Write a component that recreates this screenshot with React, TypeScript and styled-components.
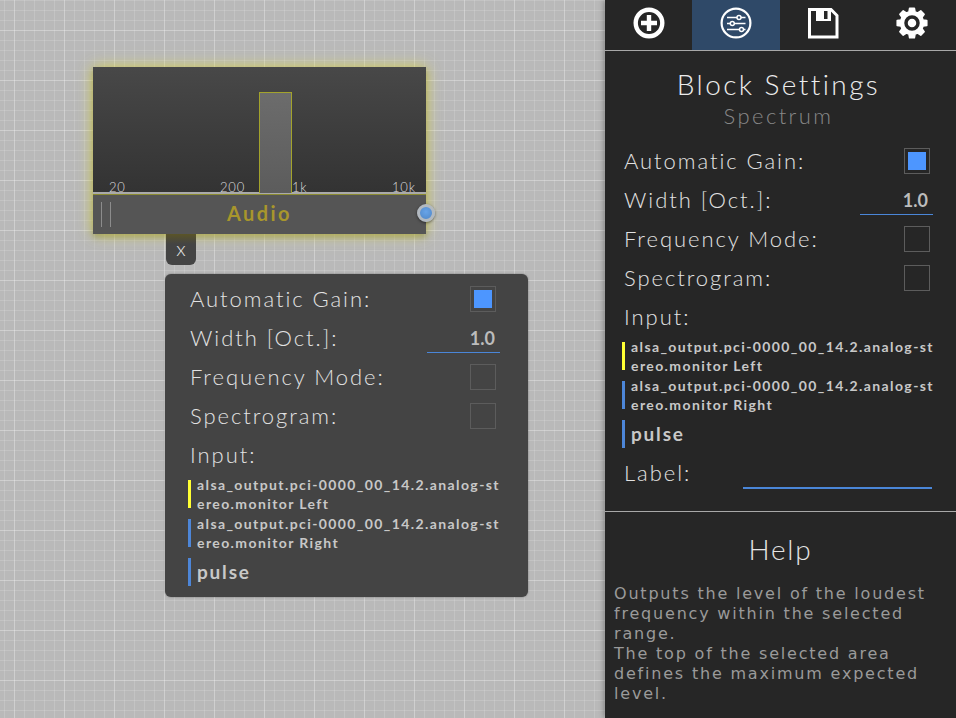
import { createGlobalStyle, styled } from 'styled-components';

const GlobalStyle = createGlobalStyle`
  html, body {
    margin: 0;
    padding: 0;
    height: 100%;
    overflow: hidden;
  }
  body {
    font-family: "Lato", "Open Sans", sans-serif;
    font-weight: 300;
    color: #ddd;
  }
`;

const Page = styled.div`
  display: flex;
  width: 956px;
  height: 718px;
  overflow: hidden;
`;

const Canvas = styled.div`
  position: relative;
  flex: 1;
  background-color: #b9b9b9;
  background-image:
    linear-gradient(to right, rgba(255, 255, 255, .2) 1px, transparent 1px),
    linear-gradient(to bottom, rgba(255, 255, 255, .2) 1px, transparent 1px),
    linear-gradient(to right, rgba(255, 255, 255, .14) 1px, transparent 1px),
    linear-gradient(to bottom, rgba(255, 255, 255, .14) 1px, transparent 1px);
  background-size: 50px 50px, 50px 50px, 10px 10px, 10px 10px;
  background-position: 14px 0, 0 30px, 4px 0, 0 0;
`;

const Block = styled.div`
  position: absolute;
  left: 93px;
  top: 67px;
  width: 333px;
  height: 167px;
  display: flex;
  flex-direction: column;
  box-shadow: 0 0 14px rgba(226, 220, 70, .8), 0 3px 6px rgba(70, 70, 0, .4);
`;

const Plot = styled.div`
  position: relative;
  height: 125px;
  background: linear-gradient(to bottom, #484848, #333);
  border-bottom: 2px solid #aaa;
  box-sizing: content-box;
`;

const SelectedBand = styled.div`
  position: absolute;
  left: 166px;
  top: 25px;
  width: 31px;
  height: 100px;
  background: linear-gradient(to bottom, #6c6c6c, #5c5c5c);
  border: 1px solid #a3a32c;
  border-bottom: none;
`;

const AxisLabel = styled.span<{ $x: number }>`
  position: absolute;
  left: ${p => p.$x}px;
  bottom: -3px;
  font-size: 13px;
  letter-spacing: .8px;
  color: #ddd;
`;

const BlockFooter = styled.div`
  position: relative;
  flex: 1;
  display: flex;
  align-items: center;
  justify-content: center;
  padding-bottom: 3px;
  background: #555;
  border-top: 1px solid #8a8a30;
`;

const BlockTitle = styled.span`
  font-size: 20px;
  font-weight: 700;
  letter-spacing: 2.4px;
  color: #a8962c;
`;

const DragHandle = styled.div`
  position: absolute;
  left: 8px;
  top: 7px;
  width: 8px;
  height: 25px;
  border-left: 1px solid #8c8c8c;
  border-right: 1px solid #8c8c8c;
`;

const OutputPort = styled.div`
  position: absolute;
  right: -9px;
  top: 9px;
  width: 12px;
  height: 12px;
  border-radius: 50%;
  background: radial-gradient(circle at 50% 40%, #68a4e8, #4f86c6);
  border: 3px solid #b2b9c0;
  box-shadow: 0 1px 3px rgba(0, 0, 0, .5);
`;

const CloseTab = styled.div`
  position: absolute;
  left: 166px;
  top: 234px;
  width: 30px;
  height: 31px;
  display: flex;
  align-items: center;
  justify-content: center;
  box-sizing: border-box;
  padding-bottom: 3px;
  border-radius: 0 0 6px 6px;
  background: linear-gradient(to bottom, #5a5428, #444 10px);
  font-size: 20px;
  font-weight: 300;
  color: #e4e4e4;
`;

const Sidebar = styled.aside`
  position: relative;
  width: 351px;
  height: 718px;
  flex-shrink: 0;
  display: flex;
  flex-direction: column;
  background: #262626;
  box-shadow: 0 0 6px rgba(0, 0, 0, .45);
`;

const Tabs = styled.nav`
  display: grid;
  grid-template-columns: 87px 1fr 1fr 1fr;
  height: 50px;
  border-bottom: 1px solid #a8a8a8;
`;

const Tab = styled.div<{ $active?: boolean }>`
  display: flex;
  align-items: center;
  justify-content: center;
  padding-bottom: 5px;
  background: ${p => (p.$active ? '#2f4968' : 'transparent')};
  color: #fff;
`;

const SettingsPanel = styled.section`
  height: 461px;
  box-sizing: border-box;
  padding: 16px 23px 0 19px;
  border-bottom: 1px solid #a8a8a8;
`;

const PanelTitle = styled.h1`
  margin: 0;
  text-align: center;
  font-size: 28px;
  line-height: 34px;
  font-weight: 300;
  letter-spacing: 2.4px;
  color: #ececec;
`;

const PanelSubtitle = styled.h2`
  margin: 1px 0 11px;
  text-align: center;
  font-size: 22px;
  line-height: 28px;
  font-weight: 300;
  letter-spacing: 2.4px;
  color: #888;
`;

const Row = styled.div`
  display: flex;
  align-items: center;
  justify-content: space-between;
  height: 39px;
`;

const RowLabel = styled.span`
  font-size: 22px;
  letter-spacing: 1.95px;
  color: #e2e2e2;
`;

const CheckBox = styled.div<{ $checked?: boolean }>`
  width: 26px;
  height: 26px;
  margin-right: 3px;
  box-sizing: border-box;
  padding: 3px;
  border: 1px solid #5c5c5c;
  &::after {
    content: '';
    display: ${p => (p.$checked ? 'block' : 'none')};
    width: 18px;
    height: 18px;
    background: #4d96ff;
  }
`;

const NumberField = styled.input`
  width: 73px;
  height: 26px;
  margin-top: 5px;
  padding: 0 5px 3px 0;
  box-sizing: border-box;
  background: transparent;
  border: none;
  border-bottom: 1px solid #4a86d8;
  outline: none;
  text-align: right;
  font-family: inherit;
  font-size: 18px;
  font-weight: 700;
  color: #bcbcbc;
`;

const TextField = styled.input`
  width: 189px;
  height: 30px;
  margin: 3px 1px 0 0;
  box-sizing: border-box;
  background: transparent;
  border: none;
  border-bottom: 2px solid #4a86d8;
  outline: none;
`;

const InputList = styled.div`
  display: flex;
  flex-direction: column;
  gap: 1px;
  width: 312px;
  margin: 1px 0 5px -2px;
`;

const InputItem = styled.div<{ $color: string }>`
  position: relative;
  padding-left: 9px;
  word-break: break-all;
  font-size: 14px;
  line-height: 19px;
  font-weight: 700;
  letter-spacing: 1.4px;
  color: #c8c8c8;
  &::before {
    content: '';
    position: absolute;
    left: 0;
    top: 5px;
    width: 3px;
    height: 28px;
    background: ${p => p.$color};
  }
`;

const PulseItem = styled(InputItem)`
  margin-top: 5px;
  font-size: 19px;
  line-height: 28px;
  letter-spacing: 1.8px;
  &::before {
    top: 0;
  }
`;

const HelpPanel = styled.section`
  flex: 1;
  padding: 20px 9px 0;
`;

const HelpTitle = styled.h2`
  margin: 0 0 18px;
  text-align: center;
  font-size: 28px;
  line-height: 34px;
  font-weight: 300;
  letter-spacing: 1.8px;
  color: #e4e4e4;
`;

const HelpText = styled.p`
  margin: 0;
  font-family: "DejaVu Sans", sans-serif;
  font-size: 16px;
  font-weight: 400;
  line-height: 20px;
  letter-spacing: 1.8px;
  color: #9a9a9a;
`;

const Popup = styled.div`
  position: absolute;
  left: 165px;
  top: 274px;
  width: 363px;
  height: 323px;
  box-sizing: border-box;
  padding: 5px 28px 0 25px;
  border-radius: 6px;
  background: #444;
  box-shadow: 0 0 2px rgba(0, 0, 0, .4);

  ${CheckBox} {
    margin-right: 4px;
  }
`;

// eight-toothed cog, outline computed around the centre of a 32 box
const gearPath = (() => {
  const pts: string[] = [];
  for (let i = 0; i < 8; i++) {
    const a = (i * Math.PI) / 4 - Math.PI / 2;
    const step = [[-0.27, 11.5], [-0.16, 15], [0.16, 15], [0.27, 11.5]];
    step.forEach(([da, r]) => {
      pts.push(`${(16 + r * Math.cos(a + da)).toFixed(2)} ${(16 + r * Math.sin(a + da)).toFixed(2)}`);
    });
  }
  return `M${pts.join('L')}Z`;
})();

const PlusIcon = () => (
  <svg width="32" height="32" viewBox="0 0 32 32" fill="none" stroke="currentColor" strokeWidth="4.4">
    <circle cx="16" cy="16" r="13.3" />
    <path d="M16 8v16M8 16h16" />
  </svg>
);

const SlidersIcon = () => (
  <svg width="32" height="32" viewBox="0 0 32 32" fill="none" stroke="currentColor" strokeWidth="2.2">
    <circle cx="16" cy="16" r="14.400" />
    <path d="M7 10.500h10M21 10.500h4.500M7 16.500h3M14.500 16.500h11M7 22.500h12.500M23.500 22.500h2" strokeWidth="1.6" />
    <circle cx="19" cy="10.500" r="2" strokeWidth="1.500" />
    <circle cx="12.300" cy="16.500" r="2" strokeWidth="1.500" />
    <circle cx="21.500" cy="22.500" r="2" strokeWidth="1.500" />
  </svg>
);

const SaveIcon = () => (
  <svg width="32" height="32" viewBox="0 0 32 32">
    <path d="M1.500 2.500H23L29 8.500V30H1.500Z" fill="none" stroke="currentColor" strokeWidth="3" />
    <path fillRule="evenodd" fill="currentColor" d="M8 2h15v12H8zM16 4h3.500v8H16z" />
  </svg>
);

const GearIcon = () => (
  <svg width="32" height="32" viewBox="0 0 32 32">
    <path fillRule="evenodd" d={gearPath} fill="currentColor" stroke="currentColor" strokeWidth="1.500" strokeLinejoin="round" />
    <circle cx="16" cy="16" r="6" fill="none" stroke="#262626" strokeWidth="3.500" />
  </svg>
);

const SettingsFields = () => (
  <>
    <Row>
      <RowLabel>Automatic Gain:</RowLabel>
      <CheckBox $checked />
    </Row>
    <Row>
      <RowLabel>Width [Oct.]:</RowLabel>
      <NumberField readOnly value="1.0" />
    </Row>
    <Row>
      <RowLabel>Frequency Mode:</RowLabel>
      <CheckBox />
    </Row>
    <Row>
      <RowLabel>Spectrogram:</RowLabel>
      <CheckBox />
    </Row>
    <Row>
      <RowLabel>Input:</RowLabel>
    </Row>
    <InputList>
      <InputItem $color="#ffff33">alsa_output.pci-0000_00_14.2.analog-stereo.monitor Left</InputItem>
      <InputItem $color="#4d86d8">alsa_output.pci-0000_00_14.2.analog-stereo.monitor Right</InputItem>
      <PulseItem $color="#4d86d8">pulse</PulseItem>
    </InputList>
  </>
);

export default function App() {
  return (
    <Page>
      <GlobalStyle />
      <Canvas>
        <Block>
          <Plot>
            <AxisLabel $x={16}>20</AxisLabel>
            <AxisLabel $x={127}>200</AxisLabel>
            <SelectedBand />
            <AxisLabel $x={199}>1k</AxisLabel>
            <AxisLabel $x={299}>10k</AxisLabel>
          </Plot>
          <BlockFooter>
            <DragHandle />
            <BlockTitle>Audio</BlockTitle>
            <OutputPort />
          </BlockFooter>
        </Block>
        <CloseTab>x</CloseTab>
        <Popup>
          <SettingsFields />
        </Popup>
      </Canvas>
      <Sidebar>
        <Tabs>
          <Tab><PlusIcon /></Tab>
          <Tab $active><SlidersIcon /></Tab>
          <Tab><SaveIcon /></Tab>
          <Tab><GearIcon /></Tab>
        </Tabs>
        <SettingsPanel>
          <PanelTitle>Block Settings</PanelTitle>
          <PanelSubtitle>Spectrum</PanelSubtitle>
          <SettingsFields />
          <Row>
            <RowLabel>Label:</RowLabel>
            <TextField readOnly />
          </Row>
        </SettingsPanel>
        <HelpPanel>
          <HelpTitle>Help</HelpTitle>
          <HelpText>
            Outputs the level of the loudest frequency within the selected range.
            <br />
            The top of the selected area defines the maximum expected level.
          </HelpText>
        </HelpPanel>
      </Sidebar>
    </Page>
  );
}
